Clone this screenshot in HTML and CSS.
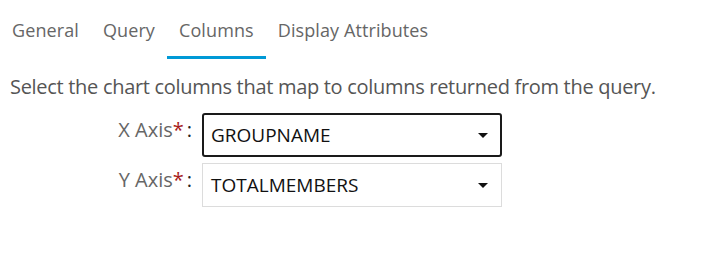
FILE: index.html
```html
<!DOCTYPE html>
<html lang="en">
<head>
  <meta charset="UTF-8" />
  <title>Chart Columns</title>
  <link rel="stylesheet" href="styles.css">
</head>
<body>
  <div class="tabs">
    <div class="tab">General</div>
    <div class="tab">Query</div>
    <div class="tab active">Columns</div>
    <div class="tab">Display Attributes</div>
  </div>

  <p class="intro">Select the chart columns that map to columns returned from the query.</p>

  <div class="form">
    <div class="form-row">
      <label>X Axis<span class="req">*</span><span class="colon">:</span></label>
      <div class="select focused">
        <span>GROUPNAME</span>
        <span class="caret"></span>
      </div>
    </div>
    <div class="form-row">
      <label>Y Axis<span class="req">*</span><span class="colon">:</span></label>
      <div class="select">
        <span>TOTALMEMBERS</span>
        <span class="caret"></span>
      </div>
    </div>
  </div>
</body>
</html>
```
FILE: styles.css
```css
body {
  margin: 0;
  font-family: 'Open Sans', 'Noto Sans', sans-serif;
  background: white;
  color: #333;
}

.tabs {
  display: flex;
  margin-top: 17px;
}

.tab {
  padding: 0 12px;
  font-size: 18px;
  letter-spacing: 0.1px;
  color: #666;
  height: 42px;
  line-height: 26px;
  box-sizing: border-box;
  border-bottom: 3px solid transparent;
}

.tab.active {
  border-bottom-color: #0099d6;
}

.intro {
  margin: 14px 0 0 10px;
  font-size: 20px;
  line-height: 27px;
  color: #555;
  letter-spacing: -0.3px;
}

.form {
  display: flex;
  flex-direction: column;
  gap: 6px;
  margin-top: 13px;
}

.form-row {
  display: flex;
  align-items: flex-start;
}

label {
  width: 202px;
  text-align: right;
  padding-right: 10px;
  box-sizing: border-box;
  font-size: 20px;
  color: #666;
  line-height: 33px;
}

.req {
  color: #a81c1c;
}

.colon {
  color: #222;
  margin-left: 3px;
}

.select {
  width: 300px;
  height: 44px;
  box-sizing: border-box;
  border: 1px solid #dcdcdc;
  display: flex;
  align-items: center;
  justify-content: space-between;
  padding: 0 13px 0 8px;
  font-size: 19px;
  color: #111;
}

.select.focused {
  border: 2px solid #1a1a1a;
  border-radius: 3px;
  padding-left: 7px;
  padding-right: 12px;
}

.caret {
  width: 0;
  height: 0;
  border-left: 5px solid transparent;
  border-right: 5px solid transparent;
  border-top: 5px solid #111;
}
```
